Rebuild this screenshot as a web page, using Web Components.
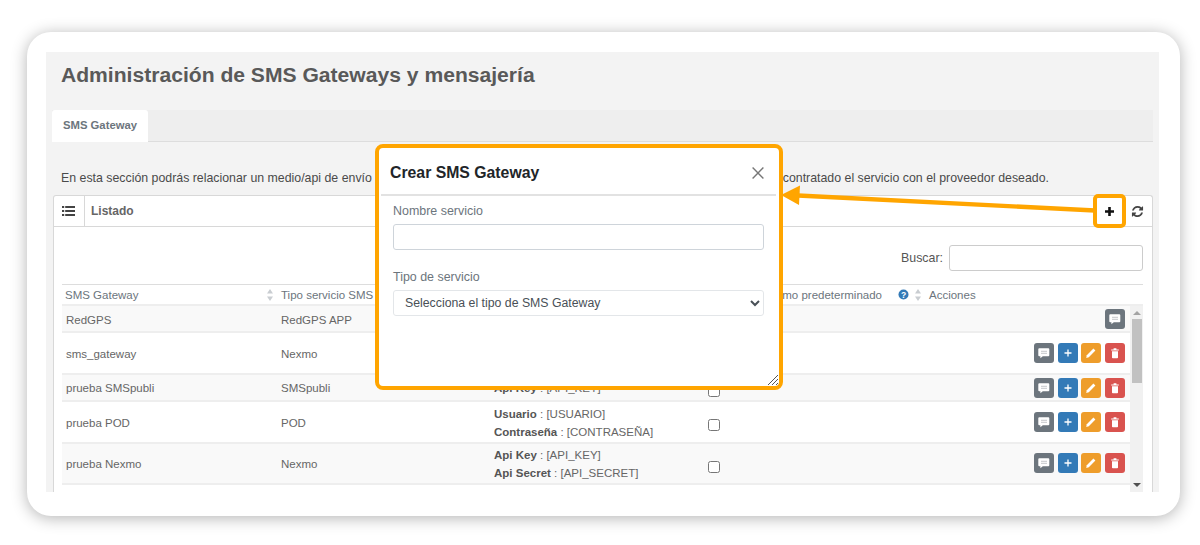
<!DOCTYPE html>
<html lang="es"><head><meta charset="utf-8"><title>SMS Gateways</title>
<style>
html,body{margin:0;padding:0;background:#fff;height:545px;overflow:hidden}
body{font-family:"Liberation Sans",Arial,sans-serif;font-size:12px;position:relative}
</style></head><body>
<x-frame>
  <x-tabs label="SMS Gateway"></x-tabs>
  <x-intro></x-intro>
  <x-panel>
    <x-gateway-table></x-gateway-table>
  </x-panel>
</x-frame>
<x-callout></x-callout>
<x-modal></x-modal>
<script>
function def(name,html,init){
  customElements.define(name,class extends HTMLElement{
    constructor(){super();this.attachShadow({mode:'open'}).innerHTML=html;}
    connectedCallback(){if(init)init(this);}
  });
}
def('x-frame',`<style>
:host{display:block;box-sizing:border-box;margin:32px 20px 0 27px;width:1153px;height:484px;padding:20px 21px 24px 19px;background:#fff;border-radius:24px;box-shadow:0 2px 16px rgba(0,0,0,.3)}
.in{height:440px;background:#f3f3f3;overflow:hidden;display:flex;flex-direction:column}
h1{margin:0;padding:12px 15px 0;height:58px;box-sizing:border-box;font-size:21.1px;line-height:22px;font-weight:700;color:#595959}
.body{padding:0 6px 0 6px;display:flex;flex-direction:column}
</style><div class="in"><h1>Administración de SMS Gateways y mensajería</h1><div class="body"><slot></slot></div></div>`);
def('x-tabs',`<style>
:host{display:flex;height:32px;background:#eee;border-bottom:1px solid #ddd;box-sizing:border-box}
.t{width:96px;height:32px;box-sizing:border-box;background:#fff;border-radius:3px 3px 0 0;color:#6c757d;font-weight:700;font-size:11.3px;line-height:31px;text-align:center}
</style><div class="t"></div>`,el=>{el.shadowRoot.querySelector('.t').textContent=el.getAttribute('label')});
def('x-intro',`<style>
:host{display:flex;justify-content:space-between;height:53px;box-sizing:border-box;padding:28px 104px 0 9px;font-size:12.35px;line-height:16px;color:#4a4a4a}
</style><span>En esta sección podrás relacionar un medio/api de envío</span><span>contratado el servicio con el proveedor deseado.</span>`);
const refresh='M1639 1056q0 5-1 7-64 268-268 434.5t-478 166.5q-146 0-282.5-55t-243.5-157l-129 129q-19 19-45 19t-45-19-19-45v-448q0-26 19-45t45-19h448q26 0 45 19t19 45-19 45l-137 137q71 66 161 102t187 36q134 0 250-65t186-179q11-17 53-117 8-23 30-23h192q13 0 22.5 9.5t9.5 22.5zm25-800v448q0 26-19 45t-45 19h-448q-26 0-45-19t-19-45 19-45l138-138q-148-137-349-137-134 0-250 65t-186 179q-11 17-53 117-8 23-30 23h-199q-13 0-22.5-9.5t-9.5-22.5v-7q65-268 270-434.5t480-166.5q146 0 284 55.5t245 156.5l130-129q19-19 45-19t45 19 19 45z';
def('x-panel',`<style>
:host{display:block;background:#fff;border:1px solid #d8d8d8;border-bottom:0;border-radius:3px 3px 0 0;margin-left:1px;width:1100px;box-sizing:border-box}
.h{display:flex;align-items:center;height:30px;border-bottom:1px solid #d8d8d8;box-sizing:content-box}
.ic{width:30px;height:30px;border-right:1px solid #d8d8d8;display:flex;align-items:center;justify-content:center;flex:none}
.ic svg{margin-right:2px}
.tt{flex:1;padding-left:6px;font-weight:700;font-size:12px;color:#666}
.plus{width:33px;display:flex;justify-content:center;margin-right:4px}
.ref{width:14px;display:flex;justify-content:center;margin-right:8px}
.b{padding:18px 9px 0 8px}
.s{display:flex;justify-content:flex-end;align-items:center;gap:6px;height:26px;color:#555;font-size:12.4px}
.s input{box-sizing:border-box;width:194px;height:26px;border:1px solid #ccc;border-radius:3px;margin:0;background:#fff;padding:0}
</style>
<div class="h"><div class="ic"><svg width="13" height="10" viewBox="0 0 13 10" fill="#444"><path d="M0 0h2.2v2H0zM3.2 0H13v2H3.2zM0 4h2.2v2H0zM3.2 4H13v2H3.2zM0 8h2.2v2H0zM3.2 8H13v2H3.2z"/></svg></div>
<div class="tt">Listado</div>
<div class="plus"><svg width="9" height="9" viewBox="0 0 9 9" fill="#111"><path d="M3.2 0h2.6v3.200H9v2.600H5.800V9H3.200V5.800H0V3.200h3.200z"/></svg></div>
<div class="ref"><svg width="13" height="13" viewBox="0 0 1792 1792" fill="#444"><path d="${refresh}"/></svg></div></div>
<div class="b"><div class="s"><label for="q">Buscar:</label><input id="q" type="text"></div><slot></slot></div>`);
const ic={
 chat:'<path d="M1.5 1.5h9a1 1 0 0 1 1 1v6a1 1 0 0 1-1 1H5L2.6 11.4V9.500H1.500a1 1 0 0 1-1-1v-6a1 1 0 0 1 1-1z" fill="#fff" transform="translate(-.2 -.2)"/><path d="M3 4.300h6M3 6.300h6" stroke="#b5b9bd" stroke-width=".8"/>',
 plus:'<path d="M5.350 2.500h1.300v2.850H9.500v1.300H6.650V9.500h-1.300V6.650H2.500v-1.300h2.850z" fill="#fff"/>',
 edit:'<path d="M8.400 1.600l2 2-6.600 6.600-2.600.7.6-2.700z" fill="#fff"/>',
 del:'<path d="M2.200 2.400h2.400V1.300h2.800v1.100h2.400v1.200H2.200zM3 4.200h6v6.300a.8.8 0 0 1-.8.8H3.800a.8.8 0 0 1-.8-.8z" fill="#fff"/>'
};
const col={chat:'#6c757d',plus:'#337ab7',edit:'#ee9d2b',del:'#d9534f'};
def('x-act',`<style>
:host{display:inline-flex;width:20px;height:20px;border-radius:3px;align-items:center;justify-content:center;background:var(--c)}
svg{width:12px;height:12px;display:block}
</style><svg viewBox="0 0 12 12"></svg>`,el=>{const k=el.getAttribute('k');el.style.setProperty('--c',col[k]);el.shadowRoot.querySelector('svg').innerHTML=ic[k];});
const sort='<svg width="8" height="14" viewBox="0 0 8 14" fill="#c9cdd1"><path d="M4 1l3 4.500H1zM4 13L1 8.500h6z"/></svg>';
const all=['chat','plus','edit','del'];
const rows=[
 ['RedGPS','RedGPS APP','',false,['chat'],27,1,1,0],
 ['sms_gateway','Nexmo','<b>Api Key</b> : [API_KEY]<br><b>Api Secret</b> : [API_SECRET]',true,all,42,0,1,0],
 ['prueba SMSpubli','SMSpubli','<b>Api Key</b> : [API_KEY]',true,all,27,1,0,0],
 ['prueba POD','POD','<b>Usuario</b> : [USUARIO]<br><b>Contraseña</b> : [CONTRASEÑA]',true,all,42,0,1,0],
 ['prueba Nexmo','Nexmo','<b>Api Key</b> : [API_KEY]<br><b>Api Secret</b> : [API_SECRET]',true,all,41,1,0,1],
];
def('x-gateway-table',`<style>
:host{display:block;margin-top:13px;font-size:11.5px;color:#666}
.hd{display:grid;grid-template-columns:215px 213px 214px 221px 205px;width:1081px;height:22px;border-top:1px solid #ddd;border-bottom:2px solid #eee;box-sizing:border-box;color:#6c757d;line-height:20px}
.hd div{display:flex;align-items:center;padding-left:4px;white-space:nowrap;overflow:hidden}
.hd .sp{flex:1}.hd svg{flex:none}
.hd .c1{padding-left:3px;padding-right:3px}
.hd .c4{justify-content:flex-end;padding-right:3px}
.hd .c5{padding-left:4px}
.main{display:flex;width:1081px}
.rows{width:1068px;flex:none}
.r{display:grid;grid-template-columns:215px 213px 214px 100px 326px;border-bottom:2px solid #eee;box-sizing:border-box;align-items:center;line-height:18px}
.r.s{background:#f9f9f9}
.r>div{padding-left:4px}
.r .t{padding-top:2px}
.r b{color:#555}
.r input{width:12px;height:12px;margin:6px 0 0;display:block;accent-color:#666}
.a{display:flex;gap:3.700px;justify-content:flex-end;padding-right:5px}
.a.u{padding-bottom:2px}
.sb{width:13px;flex:none;background:#f1f1f1;height:186px;display:flex;flex-direction:column;align-items:center}
.up{width:0;height:0;border:4px solid transparent;border-top:0;border-bottom:4px solid #a3a3a3;margin-top:5px}
.th{width:10px;height:64px;background:#c1c1c1;margin-top:4px}
.dn{width:0;height:0;border:4px solid transparent;border-bottom:0;border-top:4px solid #505050;margin-top:auto;margin-bottom:5px}
</style>
<div class="hd"><div class="c1">SMS Gateway<span class="sp"></span>${sort}</div><div>Tipo servicio SMS<span class="sp"></span></div><div>Credenciales<span class="sp"></span></div>
<div class="c4">Usar como predeterminado<svg width="11" height="11" viewBox="0 0 11 11" style="margin:0 5px 0 16px"><circle cx="5.500" cy="5.500" r="5" fill="#337ab7"/><text x="5.500" y="8.500" font-size="8.500" font-weight="700" text-anchor="middle" fill="#fff" font-family="Liberation Sans">?</text></svg>${sort}</div><div class="c5">Acciones</div></div>
<div class="main"><div class="rows" id="rows"></div><div class="sb"><span class="up"></span><span class="th"></span><span class="dn"></span></div></div>`,el=>{
 el.shadowRoot.getElementById('rows').innerHTML=rows.map(r=>{const t=r[7]?'t':'';return `<div class="r ${r[6]?'s':''}" style="height:${r[5]}px"><div class="${t}">${r[0]}</div><div class="${t}">${r[1]}</div><div class="${t}">${r[2]}</div><div>${r[3]?'<input type="checkbox" aria-label="predeterminado">':''}</div><div class="a ${r[8]?'u':''}">${r[4].map(k=>`<x-act k="${k}"></x-act>`).join('')}</div></div>`}).join('');
});
def('x-modal',`<style>
:host{position:absolute;left:375px;top:144px;width:408px;height:246px;box-sizing:border-box;border:4px solid #ffa500;border-radius:8px;background:#fff;display:block;color:#212529;overflow:hidden}
.h{display:flex;justify-content:space-between;align-items:center;height:48px;box-sizing:border-box;margin:0 3px 0 2px;padding:3px 12px 0 9px;border-bottom:2px solid #e2e2e2}
.h b{font-size:15.8px}
.b{padding:7px 15px 0 14px;display:flex;flex-direction:column}
label{font-size:12.450px;line-height:16px;color:#6c757d;margin-bottom:5px}
input,select{box-sizing:border-box;width:100%;height:26px;border:1px solid #ced4da;border-radius:3px;background:#fff;margin:0;font:12.3px "Liberation Sans",Arial,sans-serif;color:#495057}
select{border-color:#e3e6e9;padding-left:7px}
input{margin-bottom:19px}
.g{position:absolute;right:1px;bottom:1px}
</style>
<div class="h"><b>Crear SMS Gateway</b><svg width="12" height="12" viewBox="0 0 12 12" stroke="#777" stroke-width="1.400"><path d="M.6.6l10.800 10.800M11.400.6L.6 11.400"/></svg></div>
<div class="b"><label for="n">Nombre servicio</label><input id="n" type="text"><label for="t">Tipo de servicio</label><select id="t"><option>Selecciona el tipo de SMS Gateway</option></select></div>
<svg class="g" width="11" height="11" viewBox="0 0 11 11" stroke="#555" stroke-width="1"><path d="M1 11L11 1M5 11l6-6M9 11l2-2"/></svg>`);
def('x-callout',`<style>
:host{position:absolute;left:0;top:0;width:1200px;height:545px;display:block;pointer-events:none}
.box{position:absolute;left:1093px;top:194px;width:33px;height:34px;box-sizing:border-box;border:4px solid #ffa500;border-radius:5px}
svg{position:absolute;left:0;top:0}
</style><svg width="1200" height="545"><path d="M798 195.500L1095 210.500" stroke="#ffa500" stroke-width="4.400"/><path d="M781 195l19-9.500-1 19.500z" fill="#ffa500"/></svg><div class="box"></div>`);
</script>
</body></html>
